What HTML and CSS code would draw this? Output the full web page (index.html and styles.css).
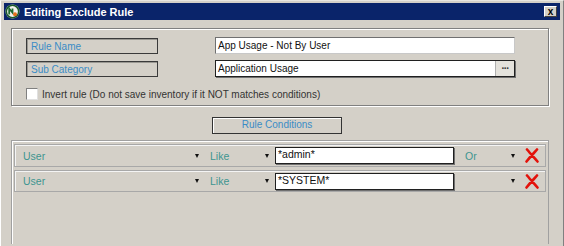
FILE: index.html
```html
<!DOCTYPE html>
<html lang="en">
  <head>
    <meta charset="UTF-8" />
    <title>Editing Exclude Rule</title>
    <link rel="stylesheet" href="styles.css">
  </head>
  <body>
    <div class="window">
      <div class="titlebar">
        <svg class="appicon" width="15" height="15" viewBox="0 0 15 15">
          <circle cx="7.5" cy="7.5" r="7" fill="#f2f2ee" />
          <circle cx="7.5" cy="7.5" r="6.2" fill="none" stroke="#1c5a2c" stroke-width="1.6" />
          <path d="M4.2 10.5V4.5l3.3 4.2V4.5" fill="none" stroke="#1c6a30" stroke-width="1.8" />
          <circle cx="10" cy="10.2" r="2" fill="#e2701c" />
        </svg>
        <span class="title">Editing Exclude Rule</span>
        <button class="close">x</button>
      </div>
      <div class="content">
        <div class="group">
          <div class="line">
            <div class="label">Rule Name</div>
            <div class="field flat">App Usage - Not By User</div>
          </div>
          <div class="line">
            <div class="label">Sub Category</div>
            <div class="field deep">
              <span>Application Usage</span>
              <span class="dots">&middot;&middot;&middot;</span>
            </div>
          </div>
          <div class="check">
            <span class="box"></span>
            <span>Invert rule (Do not save inventory if it NOT matches conditions)</span>
          </div>
        </div>
        <div class="btnrow">
          <div class="rulebtn">Rule Conditions</div>
        </div>
        <div class="panel">
          <div class="cond">
            <div class="cell c-field"><span>User</span><i class="arrow"></i></div>
            <div class="cell c-op"><span>Like</span><i class="arrow"></i></div>
            <div class="value">*admin*</div>
            <div class="cell c-join"><span>Or</span><i class="arrow"></i></div>
            <svg class="del" width="14" height="15" viewBox="0 0 14 15">
              <path d="M2 1.5c3 3.5 7 8 10.5 12M12 1.5C9 5 5 9 1.5 13.5" fill="none" stroke="#e3120b" stroke-width="2.6" stroke-linecap="round" />
            </svg>
          </div>
          <div class="cond">
            <div class="cell c-field"><span>User</span><i class="arrow"></i></div>
            <div class="cell c-op"><span>Like</span><i class="arrow"></i></div>
            <div class="value">*SYSTEM*</div>
            <div class="cell c-join"><span></span><i class="arrow"></i></div>
            <svg class="del" width="14" height="15" viewBox="0 0 14 15">
              <path d="M2 1.5c3 3.5 7 8 10.5 12M12 1.5C9 5 5 9 1.5 13.5" fill="none" stroke="#e3120b" stroke-width="2.6" stroke-linecap="round" />
            </svg>
          </div>
        </div>
      </div>
    </div>
  </body>
</html>
```

FILE: styles.css
```css
* {
  margin: 0;
  padding: 0;
  box-sizing: border-box;
}
body {
  background-color: #d4d0c8;
  font-family: "Liberation Sans", Arial, sans-serif;
  font-size: 10px;
  overflow: hidden;
}
.window {
  height: 246px;
  padding: 2px 3px 0 3px;
  border-top: 1px solid #e8e6e0;
  border-left: 1px solid #ffffff;
  border-right: 1px solid #808080;
}
.titlebar {
  height: 17px;
  background-color: #0a246a;
  display: flex;
  align-items: center;
  padding: 0 3px 0 1px;
}
.appicon {
  flex: none;
}
.title {
  color: #fff;
  font-weight: bold;
  font-size: 11px;
  margin-left: 4px;
  flex: 1;
}
.close {
  width: 13px;
  height: 11px;
  background-color: #d4d0c8;
  border: 1px solid;
  border-color: #fff #404040 #404040 #fff;
  font: bold 10px "Liberation Sans", sans-serif;
  line-height: 7px;
  color: #000;
}
.content {
  padding: 8px 11px 0 7px;
}
.group {
  height: 78px;
  border: 1px solid #808080;
  box-shadow: inset 1px 1px #fff, 1px 1px #fff;
  padding: 8px 0 0 14px;
}
.line {
  display: flex;
  align-items: center;
  height: 17px;
  margin-bottom: 6px;
}
.label {
  width: 132px;
  height: 16px;
  border: 1px solid #3a3a3a;
  box-shadow: inset 1px 1px #9a9892;
  color: #3a8cc6;
  padding: 1px 0 0 4px;
  line-height: 13px;
}
.field {
  width: 300px;
  height: 17px;
  margin-left: 57px;
  background-color: #fff;
  color: #111;
  line-height: 15px;
  padding-left: 2px;
  display: flex;
  justify-content: space-between;
}
.flat {
  border: 1px solid;
  border-color: #707070 #c8c8c8 #c8c8c8 #707070;
}
.deep {
  border: 1px solid #202020;
  box-shadow: 1px 1px 0 #707070;
}
.dots {
  width: 19px;
  background-color: #e4e2dc;
  border-left: 1px solid #b0b0b0;
  text-align: center;
  font-weight: bold;
  color: #333;
  letter-spacing: -1px;
}
.check {
  display: flex;
  align-items: center;
  margin-top: 11px;
  color: #333;
}
.box {
  width: 12px;
  height: 12px;
  background-color: #fff;
  border: 1px solid;
  border-color: #808080 #e0e0e0 #e0e0e0 #808080;
  margin-right: 4px;
}
.btnrow {
  display: flex;
  justify-content: center;
  padding: 11px 0 6px 0;
}
.rulebtn {
  width: 130px;
  height: 17px;
  border: 1px solid #333;
  box-shadow: inset 1px 1px #fff;
  color: #3a8cc6;
  text-align: center;
  line-height: 14px;
  margin-left: -6px;
}
.panel {
  height: 104px;
  border: 1px solid #a0a0a0;
  border-bottom: none;
  box-shadow: inset 1px 1px #fff;
  padding: 3px 2px 0 2px;
}
.cond {
  height: 23px;
  border: 1px solid #a8a8a8;
  box-shadow: inset 1px 1px #f4f4f4;
  display: flex;
  align-items: center;
  margin-bottom: 3px;
  color: #3d9590;
  font-size: 10.5px;
}
.cond + .cond {
  height: 22px;
}
.cell {
  display: flex;
  align-items: center;
  justify-content: space-between;
}
.c-field {
  width: 191px;
  padding: 0 7px 0 8px;
}
.c-op {
  width: 69px;
  padding: 0 6px 0 4px;
}
.c-join {
  width: 65px;
  padding: 0 4px 0 11px;
}
.arrow {
  width: 0;
  height: 0;
  border-left: 2.5px solid transparent;
  border-right: 2.5px solid transparent;
  border-top: 4px solid #111;
}
.value {
  width: 179px;
  height: 17px;
  background-color: #fff;
  border: 1px solid #202020;
  box-shadow: 1px 1px 0 #707070;
  color: #111;
  padding-left: 2px;
  line-height: 13px;
}
.del {
  margin-left: 6px;
}
```
